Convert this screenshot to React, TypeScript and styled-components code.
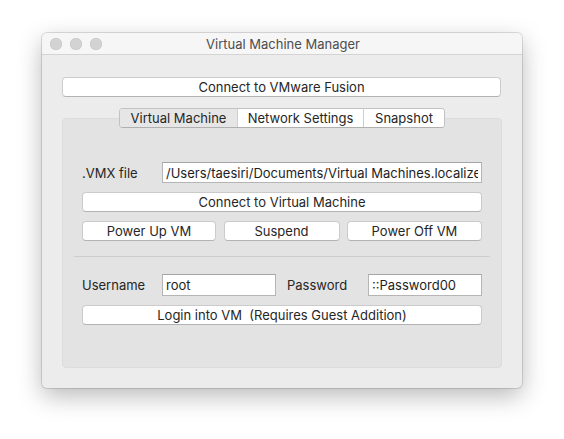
import React from "react";
import styled, { createGlobalStyle } from "styled-components";

const Global = createGlobalStyle`
  html, body { margin: 0; padding: 0; background: #ffffff; }
  body { font-family: Inter, "Liberation Sans", Arial, sans-serif; font-size: 13px; color: #262626; }
  * { box-sizing: border-box; }
`;

const Page = styled.div`
  padding: 33px 0 0 42px;
  width: 564px;
  height: 439px;
`;

const Window = styled.div`
  width: 480px;
  height: 355px;
  border-radius: 5px;
  background: #ececec;
  box-shadow: 0 0 0 1px rgba(0, 0, 0, 0.12), 0 8px 24px rgba(0, 0, 0, 0.28);
  display: flex;
  flex-direction: column;
  overflow: hidden;
`;

const TitleBar = styled.div`
  height: 22px;
  flex: none;
  display: flex;
  align-items: center;
  background: #f6f6f6;
  border-bottom: 1px solid #d4d4d4;
  padding-left: 8px;
`;

const Lights = styled.div`
  display: flex;
  gap: 8px;
`;

const Light = styled.span`
  width: 12px;
  height: 12px;
  border-radius: 50%;
  background: #d3d3d3;
  box-shadow: inset 0 0 0 0.5px #c4c4c4;
`;

const Title = styled.div`
  flex: 1;
  text-align: center;
  margin-left: -58px;
  color: #4d4d4d;
  font-size: 13px;
`;

const Content = styled.div`
  flex: 1;
  display: flex;
  flex-direction: column;
  padding: 22px 21px 20px 20px;
`;

const Button = styled.button<{ $w?: number }>`
  height: 20px;
  ${(p) => (p.$w ? `width: ${p.$w}px;` : "width: 100%;")}
  flex: none;
  background: #ffffff;
  border: 1px solid #cbcbcb;
  border-bottom-color: #b3b3b3;
  border-radius: 4px;
  font-family: inherit;
  font-size: 13px;
  color: #262626;
  padding: 0;
  line-height: 18px;
  cursor: default;
`;

const TabView = styled.div`
  margin-top: 11px;
  display: flex;
  flex-direction: column;
  align-items: center;
  flex: 1;
  width: 440px;
`;

const Segmented = styled.div`
  display: flex;
  height: 20px;
  background: #ffffff;
  border: 1px solid #c2c2c2;
  border-bottom-color: #b0b0b0;
  border-radius: 4px;
  overflow: hidden;
  position: relative;
  z-index: 1;
`;

const Segment = styled.div<{ $active?: boolean; $w: number }>`
  width: ${(p) => p.$w}px;
  text-align: center;
  line-height: 18px;
  background: ${(p) => (p.$active ? "#e6e6e6" : "#ffffff")};
  & + & {
    border-left: 1px solid #cfcfcf;
  }
`;

const Box = styled.div`
  margin-top: -10px;
  align-self: stretch;
  flex: 1;
  background: #e3e3e3;
  border: 1px solid #dcdcdc;
  border-radius: 4px;
  padding: 43px 19px 0 19px;
  display: flex;
  flex-direction: column;
`;

const Row = styled.div<{ $mt?: number }>`
  display: flex;
  align-items: center;
  margin-top: ${(p) => p.$mt ?? 0}px;
`;

const Label = styled.div<{ $w: number; $pl?: number }>`
  width: ${(p) => p.$w}px;
  padding-left: ${(p) => p.$pl ?? 0}px;
  flex: none;
  color: #262626;
`;

const Field = styled.input<{ $w?: number; $h?: number }>`
  ${(p) => (p.$w ? `width: ${p.$w}px; flex: none;` : "flex: 1; min-width: 0;")}
  height: ${(p) => p.$h ?? 21}px;
  background: #ffffff;
  border: 1px solid #b5b5b5;
  border-top-color: #a5a5a5;
  border-radius: 0;
  padding: 0 3px;
  margin: 0;
  font-family: inherit;
  font-size: 13px;
  color: #1e1e1e;
  outline: none;
`;

const ButtonRow = styled.div`
  display: flex;
  justify-content: space-between;
  margin-top: 9px;
`;

const Separator = styled.div`
  height: 1px;
  background: #cdcdcd;
  margin: 15px -8px 0 -8px;
`;

export default function App() {
  return (
    <Page>
      <Global />
      <Window>
        <TitleBar>
          <Lights>
            <Light />
            <Light />
            <Light />
          </Lights>
          <Title>Virtual Machine Manager</Title>
        </TitleBar>
        <Content>
          <Button>Connect to VMware Fusion</Button>
          <TabView>
            <Segmented>
              <Segment $active $w={117}>Virtual Machine</Segment>
              <Segment $w={126}>Network Settings</Segment>
              <Segment $w={81}>Snapshot</Segment>
            </Segmented>
            <Box>
              <Row>
                <Label $w={80}>.VMX file</Label>
                <Field
                  readOnly
                  value="/Users/taesiri/Documents/Virtual Machines.localized/"
                />
              </Row>
              <ButtonRow>
                <Button>Connect to Virtual Machine</Button>
              </ButtonRow>
              <ButtonRow>
                <Button $w={134}>Power Up VM</Button>
                <Button $w={116}>Suspend</Button>
                <Button $w={135}>Power Off VM</Button>
              </ButtonRow>
              <Separator />
              <Row $mt={17}>
                <Label $w={80}>Username</Label>
                <Field $w={114} $h={22} readOnly value="root" />
                <Label $w={92} $pl={11}>Password</Label>
                <Field $w={114} $h={22} readOnly value="::Password00" />
              </Row>
              <ButtonRow>
                <Button>Login into VM&nbsp; (Requires Guest Addition)</Button>
              </ButtonRow>
            </Box>
          </TabView>
        </Content>
      </Window>
    </Page>
  );
}
